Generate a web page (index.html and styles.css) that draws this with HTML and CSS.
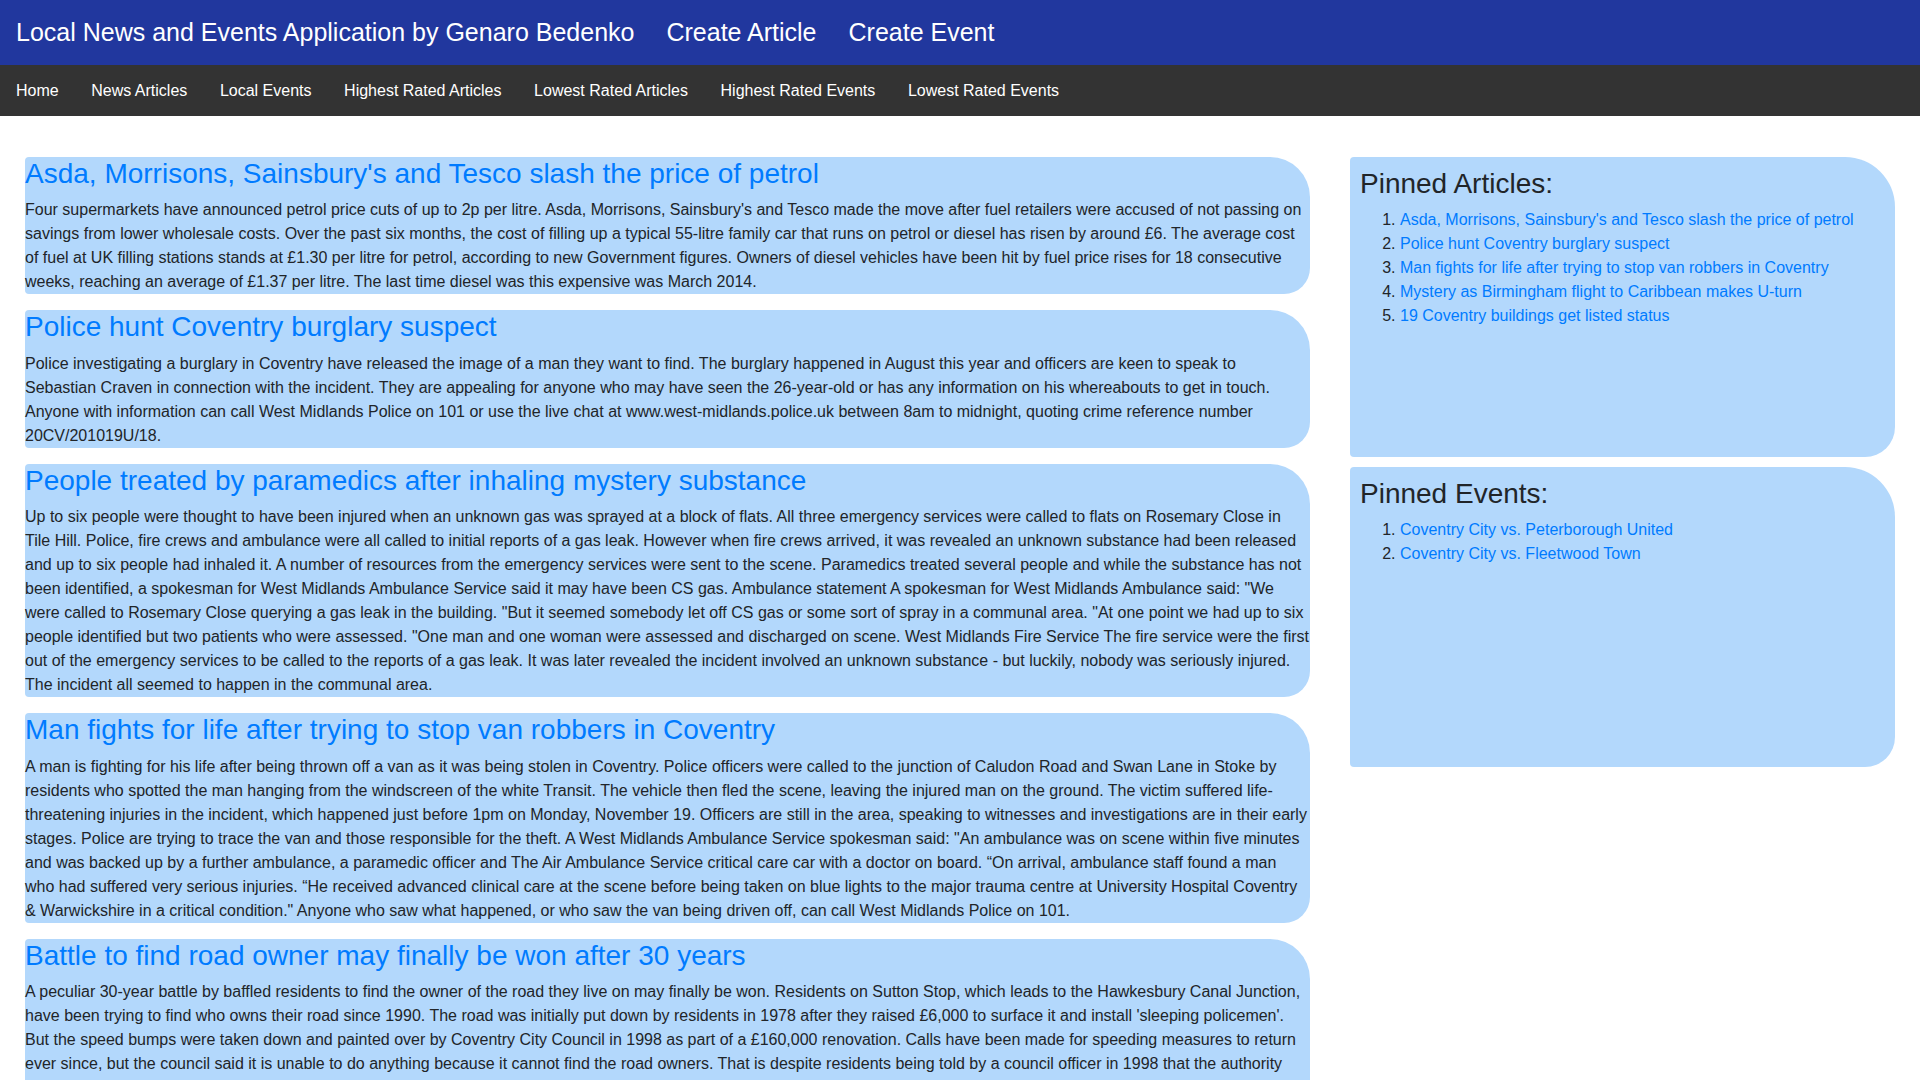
FILE: index.html
```html
<!DOCTYPE html>
<html lang="en">
<head>
<meta charset="utf-8">
<title>Local News and Events Application</title>
<link rel="stylesheet" href="styles.css">
</head>
<body>
<header class="topbar">
  <a class="brand" href="#">Local News and Events Application by Genaro Bedenko</a>
  <a class="top-link" href="#">Create Article</a>
  <a class="top-link" href="#">Create Event</a>
</header>
<nav class="subnav">
  <a href="#">Home</a>
  <a href="#">News Articles</a>
  <a href="#">Local Events</a>
  <a href="#">Highest Rated Articles</a>
  <a href="#">Lowest Rated Articles</a>
  <a href="#">Highest Rated Events</a>
  <a href="#">Lowest Rated Events</a>
</nav>
<main class="layout">
  <section class="articles">
    <article class="card">
      <h3><a href="#">Asda, Morrisons, Sainsbury's and Tesco slash the price of petrol</a></h3>
      <p>Four supermarkets have announced petrol price cuts of up to 2p per litre. Asda, Morrisons, Sainsbury's and Tesco made the move after fuel retailers were accused of not passing on savings from lower wholesale costs. Over the past six months, the cost of filling up a typical 55-litre family car that runs on petrol or diesel has risen by around £6. The average cost of fuel at UK filling stations stands at £1.30 per litre for petrol, according to new Government figures. Owners of diesel vehicles have been hit by fuel price rises for 18 consecutive weeks, reaching an average of £1.37 per litre. The last time diesel was this expensive was March 2014.</p>
    </article>
    <article class="card">
      <h3><a href="#">Police hunt Coventry burglary suspect</a></h3>
      <p>Police investigating a burglary in Coventry have released the image of a man they want to find. The burglary happened in August this year and officers are keen to speak to Sebastian Craven in connection with the incident. They are appealing for anyone who may have seen the 26-year-old or has any information on his whereabouts to get in touch. Anyone with information can call West Midlands Police on 101 or use the live chat at www.west-midlands.police.uk between 8am to midnight, quoting crime reference number 20CV/201019U/18.</p>
    </article>
    <article class="card">
      <h3><a href="#">People treated by paramedics after inhaling mystery substance</a></h3>
      <p>Up to six people were thought to have been injured when an unknown gas was sprayed at a block of flats. All three emergency services were called to flats on Rosemary Close in Tile Hill. Police, fire crews and ambulance were all called to initial reports of a gas leak. However when fire crews arrived, it was revealed an unknown substance had been released and up to six people had inhaled it. A number of resources from the emergency services were sent to the scene. Paramedics treated several people and while the substance has not been identified, a spokesman for West Midlands Ambulance Service said it may have been CS gas. Ambulance statement A spokesman for West Midlands Ambulance said: "We were called to Rosemary Close querying a gas leak in the building. "But it seemed somebody let off CS gas or some sort of spray in a communal area. "At one point we had up to six people identified but two patients who were assessed. "One man and one woman were assessed and discharged on scene. West Midlands Fire Service The fire service were the first out of the emergency services to be called to the reports of a gas leak. It was later revealed the incident involved an unknown substance - but luckily, nobody was seriously injured. The incident all seemed to happen in the communal area.</p>
    </article>
    <article class="card">
      <h3><a href="#">Man fights for life after trying to stop van robbers in Coventry</a></h3>
      <p>A man is fighting for his life after being thrown off a van as it was being stolen in Coventry. Police officers were called to the junction of Caludon Road and Swan Lane in Stoke by residents who spotted the man hanging from the windscreen of the white Transit. The vehicle then fled the scene, leaving the injured man on the ground. The victim suffered life-threatening injuries in the incident, which happened just before 1pm on Monday, November 19. Officers are still in the area, speaking to witnesses and investigations are in their early stages. Police are trying to trace the van and those responsible for the theft. A West Midlands Ambulance Service spokesman said: "An ambulance was on scene within five minutes and was backed up by a further ambulance, a paramedic officer and The Air Ambulance Service critical care car with a doctor on board. “On arrival, ambulance staff found a man who had suffered very serious injuries. “He received advanced clinical care at the scene before being taken on blue lights to the major trauma centre at University Hospital Coventry &amp; Warwickshire in a critical condition." Anyone who saw what happened, or who saw the van being driven off, can call West Midlands Police on 101.</p>
    </article>
    <article class="card">
      <h3><a href="#">Battle to find road owner may finally be won after 30 years</a></h3>
      <p>A peculiar 30-year battle by baffled residents to find the owner of the road they live on may finally be won. Residents on Sutton Stop, which leads to the Hawkesbury Canal Junction, have been trying to find who owns their road since 1990. The road was initially put down by residents in 1978 after they raised £6,000 to surface it and install 'sleeping policemen'. But the speed bumps were taken down and painted over by Coventry City Council in 1998 as part of a £160,000 renovation. Calls have been made for speeding measures to return ever since, but the council said it is unable to do anything because it cannot find the road owners. That is despite residents being told by a council officer in 1998 that the authority would take over the road, but a decision was never made. Ward councillor Linda Bigham, who has been helping residents in their fight, said the council would now look again at the ownership of the road.</p>
    </article>
  </section>
  <aside class="sidebar">
    <div class="pinned">
      <h3>Pinned Articles:</h3>
      <ol>
        <li><a href="#">Asda, Morrisons, Sainsbury's and Tesco slash the price of petrol</a></li>
        <li><a href="#">Police hunt Coventry burglary suspect</a></li>
        <li><a href="#">Man fights for life after trying to stop van robbers in Coventry</a></li>
        <li><a href="#">Mystery as Birmingham flight to Caribbean makes U-turn</a></li>
        <li><a href="#">19 Coventry buildings get listed status</a></li>
      </ol>
    </div>
    <div class="pinned">
      <h3>Pinned Events:</h3>
      <ol>
        <li><a href="#">Coventry City vs. Peterborough United</a></li>
        <li><a href="#">Coventry City vs. Fleetwood Town</a></li>
      </ol>
    </div>
  </aside>
</main>
</body>
</html>
```
FILE: styles.css
```css
* { box-sizing: border-box; }
html, body {
  margin: 0;
  padding: 0;
}
body {
  font-family: "Liberation Sans", Arial, sans-serif;
  font-size: 16px;
  line-height: 1.5;
  color: #212529;
  background: #fff;
}
a { color: #007bff; text-decoration: none; }

.topbar {
  height: 65px;
  background: #21379e;
  display: flex;
  align-items: center;
  padding-bottom: 1px;
}
.topbar a {
  color: #fff;
  font-size: 25px;
  line-height: 1.2;
  padding: 0 16px;
}

.subnav {
  height: 51px;
  background: #333333;
  display: flex;
  align-items: center;
}
.subnav a {
  color: #fff;
  font-size: 16px;
  padding: 0 16.3px;
}
.subnav a:first-child { padding-left: 16px; }

.layout {
  display: grid;
  grid-template-columns: 1285px 545px;
  column-gap: 40px;
  padding: 0 25px;
  margin-top: 40.5px;
  align-items: start;
}

.card {
  background: #b3d8fc;
  border-radius: 4px 40px 26px 4px;
  margin-bottom: 16px;
}
h3 {
  font-size: 28px;
  font-weight: 500;
  line-height: 1.2;
  margin: 0 0 8px 0;
}
.card p {
  margin: 0;
}

.pinned {
  background: #b3d8fc;
  border-radius: 4px 50px 30px 4px;
  height: 300px;
  padding: 10px;
  margin-bottom: 10px;
}
.pinned h3 { color: #212529; }
.pinned ol {
  margin: 0 0 16px 0;
  padding-left: 40px;
}
```
